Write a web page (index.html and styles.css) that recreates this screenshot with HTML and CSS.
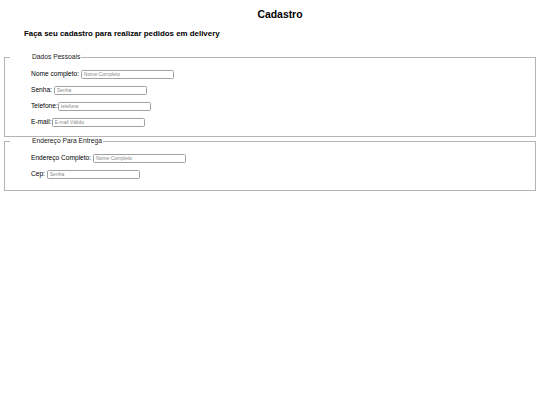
FILE: index.html
```html
<!DOCTYPE html>
<html lang="pt-BR">
<head>
    <meta charset="UTF-8">
    <meta name="viewport" content="width=device-width, initial-scale=1.0">
    <title>Cadastro</title>
    <link rel="stylesheet" href="styles.css">
</head>
<body>
    <h2 class="page-title">Cadastro</h2>
    <h4 class="page-sub">Faça seu cadastro para realizar pedidos em delivery</h4>
    <form class="cad-form">
        <fieldset class="cad-box">
            <legend>Dados Pessoais</legend>
            <div class="cad-rows">
                <div class="cad-row"><label>Nome completo:</label> <input type="text" placeholder="Nome Completo"></div>
                <div class="cad-row"><label>Senha:</label> <input type="password" placeholder="Senha"></div>
                <div class="cad-row"><label>Telefone:</label><input type="text" placeholder="telefone"></div>
                <div class="cad-row"><label>E-mail:</label><input type="text" placeholder="E-mail Válido"></div>
            </div>
        </fieldset>
        <fieldset class="cad-box cad-box-last">
            <legend>Endereço Para Entrega</legend>
            <div class="cad-rows">
                <div class="cad-row"><label>Endereço Completo:</label> <input type="text" placeholder="Nome Completo"></div>
                <div class="cad-row"><label>Cep:</label> <input type="text" placeholder="Senha"></div>
            </div>
        </fieldset>
    </form>
</body>
</html>
```
FILE: styles.css
```css
body {
    margin: 0;
    font-family: "Liberation Sans", Arial, sans-serif;
    color: #000;
    background: #fff;
}
.page-title {
    margin: 8px 0 0;
    padding-left: 20px;
    font-size: 10.4px;
    line-height: 13px;
    text-align: center;
}
.page-sub {
    margin: 7.5px 0 0 24px;
    font-size: 7.9px;
    line-height: 9px;
}
.cad-form {
    margin-top: 15.5px;
}
.cad-box {
    margin: 0 4px;
    padding: 8px 5px 10px;
    border: 1px solid #b4b4b4;
}
.cad-box-last {
    padding-bottom: 12px;
}
.cad-box legend {
    padding: 0 1px 0 22px;
    font-size: 6.7px;
    line-height: 8px;
    color: #222;
}
.cad-rows {
    display: flex;
    flex-direction: column;
    gap: 7px;
    margin-left: 21px;
}
.cad-row {
    font-size: 6.6px;
    line-height: 9px;
    height: 9px;
}
.cad-row input {
    box-sizing: border-box;
    width: 93px;
    height: 9px;
    margin: 0;
    padding: 0 2px;
    border: 1px solid #a0a0a0;
    border-radius: 1.5px;
    font-family: "Liberation Sans", Arial, sans-serif;
    font-size: 5px;
    vertical-align: middle;
}
.cad-row input::placeholder {
    color: #8a8a8a;
}
```
